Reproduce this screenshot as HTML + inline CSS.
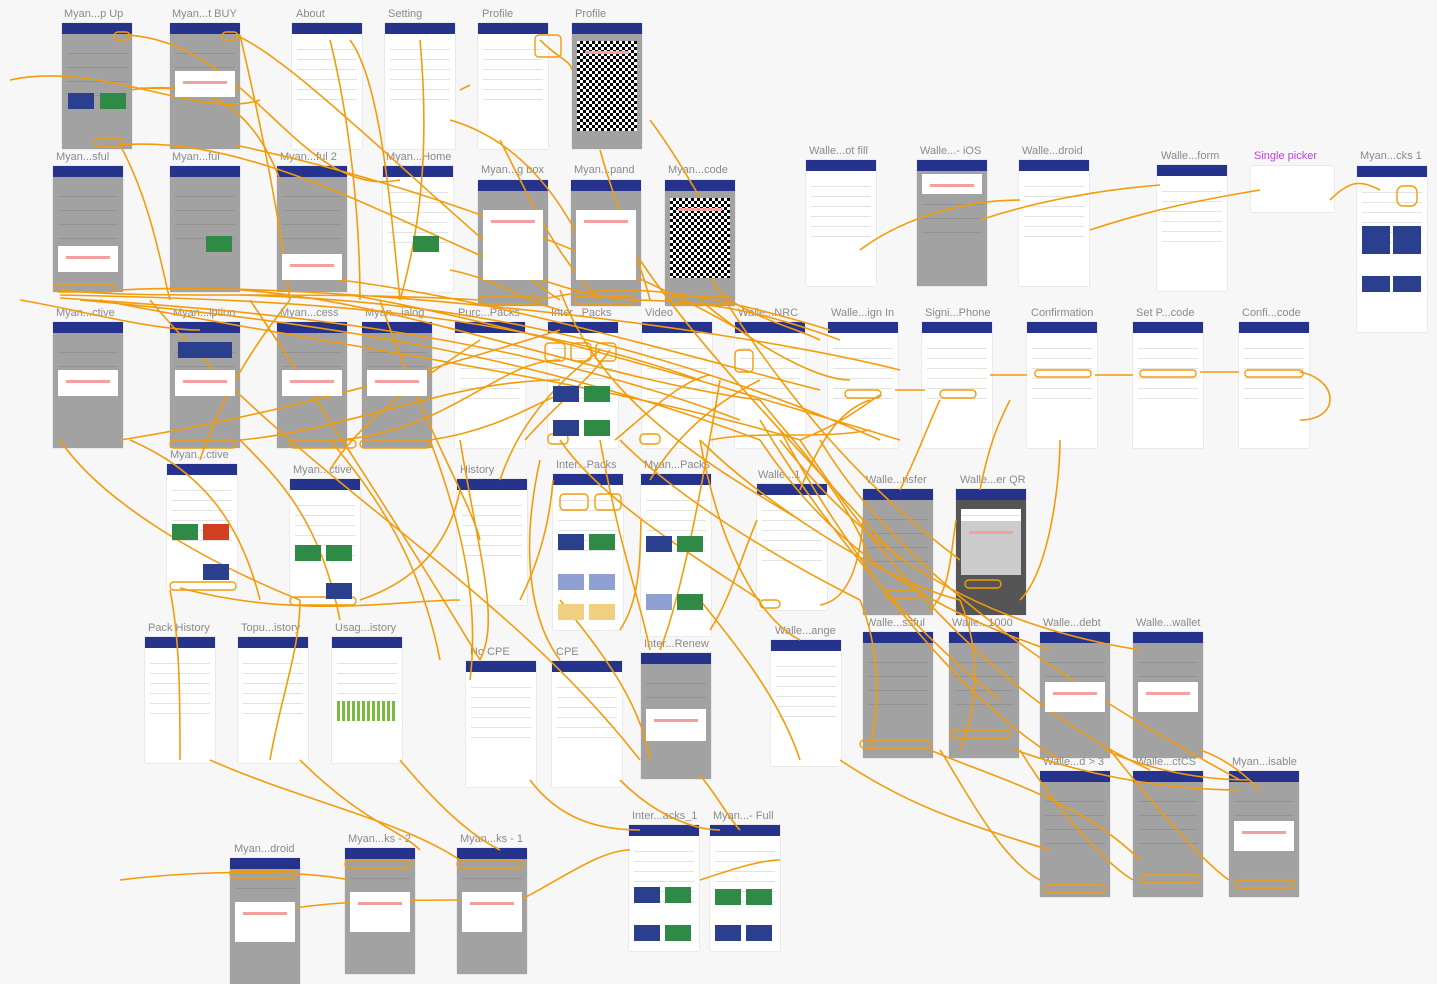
<!DOCTYPE html>
<html><head><meta charset="utf-8"><style>
body{margin:0;width:1437px;height:940px;overflow:hidden;background:#f7f7f7;font-family:"Liberation Sans","Noto Sans CJK SC",sans-serif;position:relative}
.l{position:absolute;font-size:11px;color:#8a8a8a;white-space:nowrap}
.s{position:absolute;width:70px;height:126px;background:#fff;box-shadow:0 0 1px #bbb;overflow:hidden}
.s:before{content:"";position:absolute;left:0;top:0;right:0;height:11px;background:#26338c}
.s:after{content:"";position:absolute;left:5px;right:5px;top:20px;height:60px;background:repeating-linear-gradient(#fff 0 6px,#e2e2e2 6px 7px,#fff 7px 10px)}
.g{background:#a2a2a2}
.g:after{background:repeating-linear-gradient(#a2a2a2 0 10px,#929292 10px 11px,#a2a2a2 11px 14px)}
.dl{position:absolute;left:5px;right:5px;top:48px;height:26px;background:#fff;z-index:2}
.dl:before{content:"";position:absolute;left:8px;right:8px;top:10px;height:3px;background:#f2a0a0}
.cd{position:absolute;height:16px;width:26px;background:#2b3f8f;z-index:1}
.gr{background:#2e8a45}
svg{position:absolute;left:0;top:0}
</style></head><body>
<div class="l" style="left:64px;top:8px">Myan...p Up</div><div class="s g" style="left:62px;top:23px"><div class="cd" style="left:6px;top:70px"></div><div class="cd gr" style="left:38px;top:70px"></div></div>
<div class="l" style="left:172px;top:8px">Myan...t BUY</div><div class="s g" style="left:170px;top:23px"><div class="dl"></div></div>
<div class="l" style="left:296px;top:8px">About</div><div class="s" style="left:292px;top:23px"></div>
<div class="l" style="left:388px;top:8px">Setting</div><div class="s" style="left:385px;top:23px"></div>
<div class="l" style="left:482px;top:8px">Profile</div><div class="s" style="left:478px;top:23px"></div>
<div class="l" style="left:575px;top:8px">Profile</div><div class="s g" style="left:572px;top:23px"><div class="dl" style="top:18px;height:90px;background:repeating-conic-gradient(#000 0 25%,#fff 0 50%) 0 0/6px 6px"></div></div>

<div class="l" style="left:56px;top:151px">Myan...sful</div><div class="s g" style="left:53px;top:166px"><div class="dl" style="top:80px"></div></div>
<div class="l" style="left:172px;top:151px">Myan...ful</div><div class="s g" style="left:170px;top:166px"><div class="cd gr" style="left:36px;top:70px"></div></div>
<div class="l" style="left:280px;top:151px">Myan...ful 2</div><div class="s g" style="left:277px;top:166px"><div class="dl" style="top:88px"></div></div>
<div class="l" style="left:386px;top:151px">Myan...Home</div><div class="s" style="left:383px;top:166px"><div class="cd gr" style="left:30px;top:70px"></div></div>
<div class="l" style="left:481px;top:164px">Myan...g box</div><div class="s g" style="left:478px;top:180px"><div class="dl" style="top:30px;height:70px"></div></div>
<div class="l" style="left:574px;top:164px">Myan...pand</div><div class="s g" style="left:571px;top:180px"><div class="dl" style="top:30px;height:70px"></div></div>
<div class="l" style="left:668px;top:164px">Myan...code</div><div class="s g" style="left:665px;top:180px"><div class="dl" style="top:18px;height:80px;background:repeating-conic-gradient(#000 0 25%,#fff 0 50%) 0 0/6px 6px"></div></div>
<div class="l" style="left:809px;top:145px">Walle...ot fill</div><div class="s" style="left:806px;top:160px"></div>
<div class="l" style="left:920px;top:145px">Walle...- iOS</div><div class="s g" style="left:917px;top:160px"><div class="dl" style="top:14px;height:20px"></div></div>
<div class="l" style="left:1022px;top:145px">Walle...droid</div><div class="s" style="left:1019px;top:160px"></div>
<div class="l" style="left:1161px;top:150px">Walle...form</div><div class="s" style="left:1157px;top:165px"></div>
<div class="l" style="left:1254px;top:150px;color:#c040e0">Single picker</div><div style="position:absolute;left:1251px;top:166px;width:83px;height:46px;background:#fff;box-shadow:0 0 1px #bbb"></div>
<div class="l" style="left:1360px;top:150px">Myan...cks 1</div><div class="s" style="left:1357px;top:166px;height:166px"><div class="cd" style="left:5px;top:60px;width:28px;height:28px"></div><div class="cd" style="left:36px;top:60px;width:28px;height:28px"></div><div class="cd" style="left:5px;top:110px;width:28px"></div><div class="cd" style="left:36px;top:110px;width:28px"></div></div>

<div class="l" style="left:56px;top:307px">Myan...ctive</div><div class="s g" style="left:53px;top:322px"><div class="dl"></div></div>
<div class="l" style="left:173px;top:307px">Myan...iption</div><div class="s g" style="left:170px;top:322px"><div class="dl"></div><div class="cd" style="left:8px;top:20px;width:54px"></div></div>
<div class="l" style="left:280px;top:307px">Myan...cess</div><div class="s g" style="left:277px;top:322px"><div class="dl"></div></div>
<div class="l" style="left:365px;top:307px">Myan...ialog</div><div class="s g" style="left:362px;top:322px"><div class="dl"></div></div>
<div class="l" style="left:458px;top:307px">Purc...Packs</div><div class="s" style="left:455px;top:322px"></div>
<div class="l" style="left:551px;top:307px">Inter...Packs</div><div class="s" style="left:548px;top:322px"><div class="cd" style="left:5px;top:64px"></div><div class="cd gr" style="left:36px;top:64px"></div><div class="cd" style="left:5px;top:98px"></div><div class="cd gr" style="left:36px;top:98px"></div></div>
<div class="l" style="left:645px;top:307px">Video</div><div class="s" style="left:642px;top:322px"></div>
<div class="l" style="left:738px;top:307px">Walle...NRC</div><div class="s" style="left:735px;top:322px"></div>
<div class="l" style="left:831px;top:307px">Walle...ign In</div><div class="s" style="left:828px;top:322px"></div>
<div class="l" style="left:925px;top:307px">Signi...Phone</div><div class="s" style="left:922px;top:322px"></div>
<div class="l" style="left:1031px;top:307px">Confirmation</div><div class="s" style="left:1027px;top:322px"></div>
<div class="l" style="left:1136px;top:307px">Set P...code</div><div class="s" style="left:1133px;top:322px"></div>
<div class="l" style="left:1242px;top:307px">Confi...code</div><div class="s" style="left:1239px;top:322px"></div>

<div class="l" style="left:170px;top:449px">Myan...ctive</div><div class="s" style="left:167px;top:464px"><div class="cd gr" style="left:5px;top:60px"></div><div class="cd" style="left:36px;top:60px;background:#d04020"></div><div class="cd" style="left:36px;top:100px"></div></div>
<div class="l" style="left:293px;top:464px">Myan...ctive</div><div class="s" style="left:290px;top:479px"><div class="cd gr" style="left:5px;top:66px"></div><div class="cd gr" style="left:36px;top:66px"></div><div class="cd" style="left:36px;top:104px"></div></div>
<div class="l" style="left:460px;top:464px">History</div><div class="s" style="left:457px;top:479px"></div>
<div class="l" style="left:556px;top:459px">Inter...Packs</div><div class="s" style="left:553px;top:474px;height:156px"><div class="cd" style="left:5px;top:60px"></div><div class="cd gr" style="left:36px;top:60px"></div><div class="cd" style="left:5px;top:100px;background:#8fa0d0"></div><div class="cd" style="left:36px;top:100px;background:#8fa0d0"></div><div class="cd" style="left:5px;top:130px;background:#f0d080"></div><div class="cd" style="left:36px;top:130px;background:#f0d080"></div></div>
<div class="l" style="left:644px;top:459px">Myan...Packs</div><div class="s" style="left:641px;top:474px;height:162px"><div class="cd" style="left:5px;top:62px"></div><div class="cd gr" style="left:36px;top:62px"></div><div class="cd" style="left:5px;top:120px;background:#8fa0d0"></div><div class="cd gr" style="left:36px;top:120px"></div></div>
<div class="l" style="left:758px;top:469px">Walle...1</div><div class="s" style="left:757px;top:484px"></div>
<div class="l" style="left:866px;top:474px">Walle...nsfer</div><div class="s g" style="left:863px;top:489px"></div>
<div class="l" style="left:960px;top:474px">Walle...er QR</div><div class="s" style="left:956px;top:489px;background:#555"><div class="dl" style="top:32px;height:54px;background:#ccc"></div></div>

<div class="l" style="left:148px;top:622px">Pack History</div><div class="s" style="left:145px;top:637px"></div>
<div class="l" style="left:241px;top:622px">Topu...istory</div><div class="s" style="left:238px;top:637px"></div>
<div class="l" style="left:335px;top:622px">Usag...istory</div><div class="s" style="left:332px;top:637px"><div class="cd" style="left:5px;top:64px;width:60px;height:20px;background:repeating-linear-gradient(90deg,#7bb840 0 3px,#fff 3px 5px)"></div></div>
<div class="l" style="left:470px;top:646px">No CPE</div><div class="s" style="left:466px;top:661px"></div>
<div class="l" style="left:556px;top:646px">CPE</div><div class="s" style="left:552px;top:661px"></div>
<div class="l" style="left:644px;top:638px">Inter...Renew</div><div class="s g" style="left:641px;top:653px"><div class="dl" style="top:56px;height:32px"></div></div>
<div class="l" style="left:775px;top:625px">Walle...ange</div><div class="s" style="left:771px;top:640px"></div>
<div class="l" style="left:866px;top:617px">Walle...ssful</div><div class="s g" style="left:863px;top:632px"></div>
<div class="l" style="left:952px;top:617px">Walle...1000</div><div class="s g" style="left:949px;top:632px"></div>
<div class="l" style="left:1043px;top:617px">Walle...debt</div><div class="s g" style="left:1040px;top:632px"><div class="dl" style="top:50px;height:30px"></div></div>
<div class="l" style="left:1136px;top:617px">Walle...wallet</div><div class="s g" style="left:1133px;top:632px"><div class="dl" style="top:50px;height:30px"></div></div>

<div class="l" style="left:1043px;top:756px">Walle...d &gt; 3</div><div class="s g" style="left:1040px;top:771px"></div>
<div class="l" style="left:1136px;top:756px">Walle...ctCS</div><div class="s g" style="left:1133px;top:771px"></div>
<div class="l" style="left:1232px;top:756px">Myan...isable</div><div class="s g" style="left:1229px;top:771px"><div class="dl" style="top:50px;height:30px"></div></div>
<div class="l" style="left:632px;top:810px">Inter...acks_1</div><div class="s" style="left:629px;top:825px"><div class="cd" style="left:5px;top:62px"></div><div class="cd gr" style="left:36px;top:62px"></div><div class="cd" style="left:5px;top:100px"></div><div class="cd gr" style="left:36px;top:100px"></div></div>
<div class="l" style="left:713px;top:810px">Myan...- Full</div><div class="s" style="left:710px;top:825px"><div class="cd gr" style="left:5px;top:64px"></div><div class="cd gr" style="left:36px;top:64px"></div><div class="cd" style="left:5px;top:100px"></div><div class="cd" style="left:36px;top:100px"></div></div>
<div class="l" style="left:348px;top:833px">Myan...ks - 2</div><div class="s g" style="left:345px;top:848px"><div class="dl" style="top:44px;height:40px"></div></div>
<div class="l" style="left:460px;top:833px">Myan...ks - 1</div><div class="s g" style="left:457px;top:848px"><div class="dl" style="top:44px;height:40px"></div></div>
<div class="l" style="left:234px;top:843px">Myan...droid</div><div class="s g" style="left:230px;top:858px"><div class="dl" style="top:44px;height:40px"></div></div>

<svg width="1437" height="940" fill="none" stroke="#f39c0b" stroke-width="1.6">
<path d="M125 35C250 40 300 200 400 180M235 35C300 60 480 250 560 300M130 90C200 80 250 100 280 180M240 90L140 88M120 145C300 130 500 300 640 300M235 145C400 180 600 250 740 330M460 90L470 85M540 40C560 60 570 60 572 70"/>
<path d="M60 290C150 300 300 290 480 300M120 290C300 280 700 320 900 370M240 290C400 300 600 380 760 400M340 280C500 300 700 360 820 390M450 270C500 280 520 300 560 310M540 300C620 280 700 290 830 330M630 300C700 300 760 310 840 340M730 300C760 320 800 330 820 340"/>
<path d="M120 440C250 420 400 380 560 330M240 440C350 430 450 380 560 380M340 440C450 430 500 360 560 360M430 440C500 430 540 400 560 395M525 440C560 400 590 380 610 350M615 440C640 420 680 380 710 375M710 440C760 430 820 440 870 430M800 440C850 420 870 400 880 395M895 390L925 390M990 375L1027 375M1095 375L1133 375M1200 372L1239 372M1300 372C1340 380 1340 420 1300 420"/>
<path d="M60 440C100 500 200 560 300 600M180 588C300 620 400 600 460 600M360 600C420 580 450 540 460 490M520 600C540 560 550 520 553 480M620 630C640 600 640 560 641 520M710 630C730 600 740 560 757 520M820 605C850 600 860 560 863 520M930 610C950 590 950 560 956 520M1020 600C1050 570 1060 480 1060 440"/>
<path d="M200 460C220 400 250 350 290 300M330 470C360 420 420 380 480 340M500 480C520 420 560 380 600 350M650 480C680 430 720 400 760 380M800 490C820 440 840 410 870 400M900 490C920 450 930 420 940 400M980 490C990 440 1000 420 1010 400"/>
<path d="M210 760C300 800 400 820 460 860M300 760C360 820 400 830 420 850M400 760C450 820 480 840 500 850M530 780C560 820 600 830 640 830M620 780C660 820 700 830 720 830M700 775C720 800 730 820 740 830M840 760C900 800 950 820 1050 850M930 750C1000 780 1080 800 1140 860M1015 750C1100 780 1180 790 1240 790M1105 750C1150 770 1200 780 1250 780M1200 750C1230 760 1250 780 1260 790"/>
<path d="M120 880C200 870 300 870 350 880M240 920C300 900 400 900 460 900M520 900C560 880 600 850 630 850M700 880C730 870 760 860 780 860M1040 880C1000 860 960 780 940 750M1133 880C1100 860 1050 800 1020 750M1229 880C1200 860 1150 800 1110 750"/>
<path d="M760 400C800 450 850 500 870 560M760 420C820 520 900 620 1000 700M780 430C850 560 960 700 1060 760M800 440C880 560 1000 700 1150 770M720 380C700 500 680 600 660 650M700 440C720 550 760 620 800 640M600 440C620 550 640 600 650 650M540 460C520 550 530 620 560 660M460 440C480 560 500 620 480 660"/>
<path d="M10 80C100 60 200 120 260 100M20 300C80 310 150 330 200 330M350 40C380 80 390 200 400 300M450 120C520 140 560 200 580 240M650 120C680 160 700 200 720 230M860 250C900 220 960 200 1020 200M980 220C1040 200 1100 190 1160 185M1090 230C1150 210 1200 200 1260 190M1330 200C1350 180 1360 180 1380 190"/>
<path d="M150 300C300 480 500 580 640 760M250 300C350 450 420 560 480 660M380 300C420 420 470 500 480 540M560 290C600 400 700 460 800 520M640 260C700 350 800 450 900 560M700 260C760 360 840 470 960 560"/>
<path d="M60 295C300 300 500 310 700 380M60 298C250 310 500 330 740 420M80 300C300 320 520 350 760 440M100 300C300 340 600 380 800 440M240 295C450 300 650 340 880 440M350 295C500 320 700 380 900 440M120 145C150 200 160 260 170 300M240 35C260 120 280 220 290 300M330 40C350 120 360 220 360 300M420 40C430 150 420 230 400 300M500 140C540 220 560 260 600 300M600 150C620 220 640 260 650 300M700 300C760 350 820 380 850 380"/>
<path d="M560 440C600 500 700 560 760 600M620 440C680 500 780 560 860 600M700 440C760 500 880 580 960 600M760 440C820 530 900 600 1050 650M780 440C850 530 950 620 1140 650M820 440C880 540 1000 650 1240 780M560 600C600 650 640 700 650 760M700 600C740 650 780 700 800 760M860 600C880 650 880 700 870 750M960 600C980 650 980 700 960 750"/>
<path d="M130 440C200 470 240 520 260 600M240 440C280 480 320 520 340 620M330 440C380 500 420 560 440 660M430 440C460 520 480 600 470 680M170 590C180 640 180 700 180 760M300 600C300 650 280 700 270 760"/>
</svg>
<svg width="1437" height="940" fill="none" stroke="#f39c0b" stroke-width="1.4">
<rect x="114" y="32" width="16" height="8" rx="4"/><rect x="222" y="32" width="16" height="8" rx="4"/><rect x="95" y="138" width="28" height="9" rx="4"/><rect x="535" y="35" width="26" height="22" rx="4"/><rect x="583" y="118" width="32" height="8" rx="4"/><rect x="545" y="343" width="20" height="18" rx="4"/><rect x="571" y="343" width="20" height="18" rx="4"/><rect x="596" y="343" width="20" height="18" rx="4"/><rect x="548" y="434" width="20" height="10" rx="4"/><rect x="640" y="434" width="20" height="10" rx="4"/><rect x="735" y="350" width="18" height="22" rx="4"/><rect x="845" y="390" width="36" height="8" rx="4"/><rect x="940" y="390" width="36" height="8" rx="4"/><rect x="1035" y="370" width="56" height="7" rx="3"/><rect x="1140" y="370" width="56" height="7" rx="3"/><rect x="1245" y="370" width="58" height="7" rx="3"/><rect x="560" y="494" width="28" height="16" rx="4"/><rect x="595" y="494" width="26" height="16" rx="4"/><rect x="760" y="600" width="20" height="8" rx="4"/><rect x="885" y="590" width="36" height="8" rx="4"/><rect x="965" y="580" width="36" height="8" rx="4"/><rect x="650" y="730" width="50" height="8" rx="4"/><rect x="950" y="730" width="60" height="8" rx="4"/><rect x="860" y="740" width="70" height="8" rx="4"/><rect x="1045" y="885" width="60" height="8" rx="4"/><rect x="1140" y="875" width="60" height="8" rx="4"/><rect x="1235" y="880" width="60" height="8" rx="4"/><rect x="480" y="296" width="60" height="8" rx="4"/><rect x="575" y="296" width="60" height="8" rx="4"/><rect x="670" y="296" width="60" height="8" rx="4"/><rect x="55" y="284" width="60" height="8" rx="4"/><rect x="170" y="440" width="66" height="8" rx="4"/><rect x="290" y="440" width="66" height="8" rx="4"/><rect x="170" y="582" width="66" height="8" rx="4"/><rect x="290" y="597" width="66" height="8" rx="4"/><rect x="360" y="440" width="70" height="8" rx="4"/><rect x="1397" y="186" width="20" height="20" rx="6"/><rect x="230" y="870" width="66" height="8" rx="4"/><rect x="345" y="860" width="66" height="8" rx="4"/><rect x="457" y="860" width="66" height="8" rx="4"/>
</svg>
</body></html>
